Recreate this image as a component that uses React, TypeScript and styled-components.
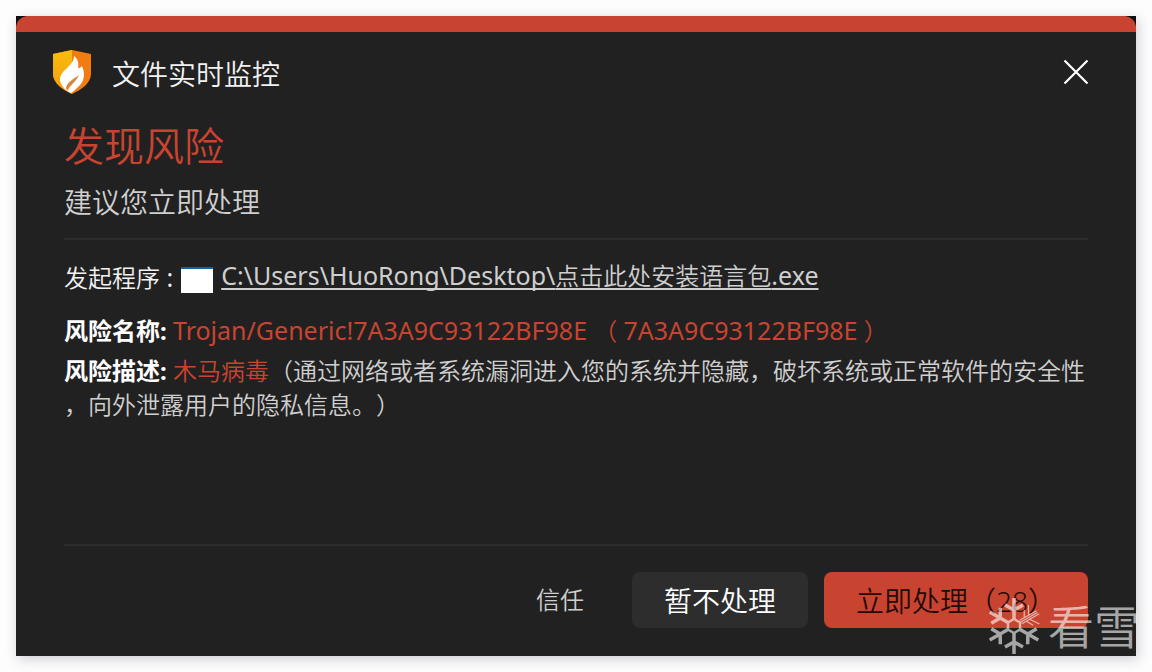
import React from "react";
import styled, { createGlobalStyle } from "styled-components";

const GlobalStyle = createGlobalStyle`
  * { box-sizing: border-box; }
  body {
    margin: 0;
    background: #fdfdfe;
    font-family: "Noto Sans", "Noto Sans CJK SC", sans-serif;
    font-weight: 350;
    text-spacing-trim: space-all;
  }
`;

const Page = styled.main`
  min-height: 100vh;
  padding: 16px;
  display: flex;
`;

const Dialog = styled.section`
  position: relative;
  flex: 1;
  min-width: 0;
  display: flex;
  flex-direction: column;
  background: #212121;
  box-shadow: 2px 3px 12px rgba(40, 40, 60, 0.22);
`;

const StripeFrame = styled.div`
  background: #0b0d12;
`;

const Stripe = styled.div`
  height: 16px;
  background: #c94430;
  border-radius: 12px 12px 0 0;
`;

const TitleBar = styled.header`
  display: flex;
  align-items: center;
  height: 80px;
  padding: 0 44px 0 36px;
`;

const Title = styled.h1`
  flex: 1;
  margin: 4px 0 0 20px;
  font-size: 28px;
  line-height: 40px;
  font-weight: inherit;
  color: #f2f2f2;
`;

const CloseButton = styled.button`
  width: 32px;
  height: 32px;
  padding: 0;
  border: 0;
  background: none;
  color: #fff;
  display: flex;
  align-items: center;
  justify-content: center;
`;

const Body = styled.div`
  flex: 1;
  display: flex;
  flex-direction: column;
  padding: 0 48px 28px;
`;

const Alert = styled.h2`
  margin: 4px 0 0;
  font-size: 40px;
  line-height: 60px;
  font-weight: inherit;
  color: #c94430;
`;

const Advice = styled.p`
  margin: 7px 0 17px;
  font-size: 28px;
  line-height: 38px;
  color: #cfcfcf;
`;

const Divider = styled.hr`
  width: 100%;
  height: 2px;
  margin: 0;
  border: 0;
  background: #2c2c2c;
`;

const ProgramRow = styled.div`
  display: flex;
  align-items: center;
  gap: 8px;
  margin-top: 20px;
  font-size: 24px;
  line-height: 36px;
  color: #f2f2f2;
`;

const FileIcon = styled.span`
  width: 32px;
  height: 26px;
  margin-top: 4px;
  background: #fff;
  border-top: 2px solid #1463a8;
`;

const FileLink = styled.a`
  padding-bottom: 4px;
  line-height: 32px;
  color: #cfcfcf;
  text-decoration: underline;
  text-decoration-thickness: 2px;
  text-underline-offset: 3px;
  text-decoration-skip-ink: none;
`;

const Latin = styled.span`
  font-size: 25px;
  line-height: 1;
  font-weight: 400;
`;

const Detail = styled.p<{ $top: number }>`
  margin: ${(p) => p.$top}px 0 0;
  font-size: 24px;
  line-height: 34px;
  line-break: anywhere;
  color: #cfcfcf;
`;

const Label = styled.strong`
  font-weight: 700;
  color: #fff;
`;

const Risk = styled.span`
  color: #c94430;
`;

const Footer = styled.footer`
  margin-top: auto;
`;

const Actions = styled.div`
  display: flex;
  justify-content: flex-end;
  align-items: center;
  gap: 16px;
  padding-top: 26px;
`;

const Button = styled.button<{ $kind: "text" | "plain" | "danger" }>`
  height: 56px;
  padding: ${(p) => (p.$kind === "text" ? "0 32px 4px" : "0 32px")};
  border: 0;
  border-radius: 8px;
  font-family: inherit;
  font-weight: inherit;
  font-size: ${(p) => (p.$kind === "text" ? 24 : 28)}px;
  background: ${(p) =>
    p.$kind === "danger" ? "#c94430" : p.$kind === "plain" ? "#2d2d2d" : "none"};
  color: ${(p) =>
    p.$kind === "danger" ? "#240a06" : p.$kind === "plain" ? "#ffffff" : "#cfcfcf"};
`;

const Watermark = styled.div`
  position: absolute;
  right: -4px;
  bottom: 0;
  display: flex;
  align-items: center;
  gap: 8px;
  opacity: 0.6;
  color: #fff;
  font-size: 46px;
  line-height: 60px;
  pointer-events: none;
`;

function ShieldLogo() {
  return (
    <svg width="40" height="46" viewBox="0 0 40 46" aria-hidden="true">
      <defs>
        <linearGradient id="gold" x1="0" y1="0" x2="0" y2="1">
          <stop offset="0" stopColor="#f9bd0c" />
          <stop offset="1" stopColor="#f59a10" />
        </linearGradient>
      </defs>
      <path d="M20 1 L39 5 V25 C39 34 29 41 20 45 C11 41 1 34 1 25 V5 Z" fill="#f07c12" />
      <path d="M20 1 V45 C11 41 1 34 1 25 V5 Z" fill="url(#gold)" />
      <path
        d="M22 7 C26 10 27 14 26 19 C29 19 30 17 30 17 C33 23 33 32 27 37 C24 40 21 43 19 44 C15 42 9 38 8 31 C8 25 12 22 15 19 C19 15 22 12 22 7 Z"
        fill="#fff"
      />
      <path d="M27 26 C23 29 15 33 14 39 C14 40 15 41 16 41 C18 36 24 33 27 26 Z" fill="#d8843a" />
    </svg>
  );
}

function CloseIcon() {
  return (
    <svg width="28" height="28" viewBox="0 0 28 28" aria-hidden="true">
      <path d="M2.500 2.500 L25.500 25.500 M25.500 2.500 L2.500 25.500" stroke="currentColor" strokeWidth="2.200" />
    </svg>
  );
}

function Snowflake() {
  const arms = [0, 120, 180, 240, 300];
  return (
    <svg width="52" height="58" viewBox="-26 -29 52 58" fill="none" stroke="#fff" aria-hidden="true">
      <path d="M0 -7 L6 -3.500 V3.500 L0 7 L-6 3.500 V-3.500 Z" strokeWidth="2.500" />
      {arms.map((a) => (
        <path key={a} transform={`rotate(${a})`} d="M0 -7 V-28 M-9 -21 L0 -16 L9 -21" strokeWidth="3.500" />
      ))}
      <g transform="rotate(60)" strokeWidth="1.200">
        <path d="M-2 -8 V-27 M0 -8 V-27 M2 -8 V-28 M-11 -23 L-2 -18 M11 -23 L2 -17 M-9 -17 L-2 -13 M9 -17 L2 -13" />
      </g>
    </svg>
  );
}

export default function App() {
  return (
    <Page lang="zh-CN">
      <GlobalStyle />
      <Dialog role="dialog" aria-labelledby="dialog-title">
        <StripeFrame>
          <Stripe />
        </StripeFrame>
        <TitleBar>
          <ShieldLogo />
          <Title id="dialog-title">文件实时监控</Title>
          <CloseButton type="button" aria-label="关闭">
            <CloseIcon />
          </CloseButton>
        </TitleBar>
        <Body>
          <Alert>发现风险</Alert>
          <Advice>建议您立即处理</Advice>
          <Divider />
          <ProgramRow>
            <span>发起程序<Latin> :</Latin></span>
            <FileIcon />
            <FileLink href="#file">
              <Latin>C:\Users\HuoRong\Desktop\</Latin>点击此处安装语言包<Latin>.exe</Latin>
            </FileLink>
          </ProgramRow>
          <Detail $top={18}>
            <Label>风险名称:</Label>{" "}
            <Risk>
              <Latin>Trojan/Generic!7A3A9C93122BF98E</Latin> （ <Latin>7A3A9C93122BF98E</Latin> ）
            </Risk>
          </Detail>
          <Detail $top={6}>
            <Label>风险描述:</Label> <Risk>木马病毒</Risk>
            （通过网络或者系统漏洞进入您的系统并隐藏，破坏系统或正常软件的安全性，向外泄露用户的隐私信息。）
          </Detail>
          <Footer>
            <Divider />
            <Actions>
              <Button type="button" $kind="text">信任</Button>
              <Button type="button" $kind="plain">暂不处理</Button>
              <Button type="button" $kind="danger">立即处理（28）</Button>
            </Actions>
          </Footer>
        </Body>
        <Watermark>
          <Snowflake />
          <span>看雪</span>
        </Watermark>
      </Dialog>
    </Page>
  );
}
